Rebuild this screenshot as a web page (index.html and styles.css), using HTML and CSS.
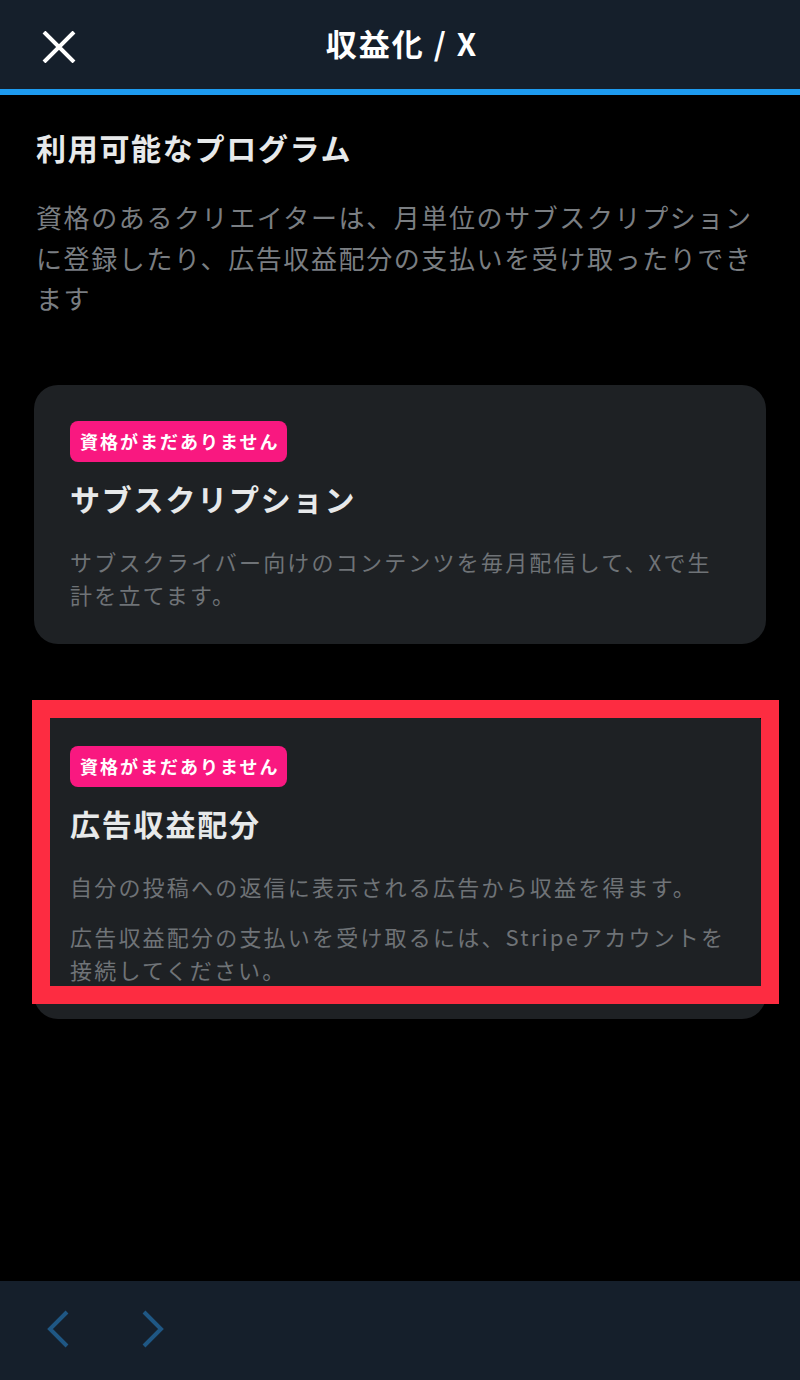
FILE: index.html
```html
<!DOCTYPE html>
<html lang="ja">
<head>
  <meta charset="UTF-8">
  <meta name="viewport" content="width=device-width, initial-scale=1.0">
  <title>収益化 / X</title>
  <link rel="stylesheet" href="styles.css">
</head>
<body>
  <div class="page">
    <div class="topbar">
      <a class="close" href="#">
        <svg width="36" height="32" viewBox="0 0 36 32"><path d="M3 1 L33 31 M33 1 L3 31" stroke="#fff" stroke-width="4" fill="none"/></svg>
      </a>
      <h1 class="title">収益化 / X</h1>
    </div>
    <div class="progress"></div>

    <div class="main">
      <h2 class="section-title">利用可能なプログラム</h2>
      <p class="section-desc">資格のあるクリエイターは、月単位のサブスクリプションに登録したり、広告収益配分の支払いを受け取ったりできます</p>

      <ul class="programs">
        <li class="card">
          <span class="badge">資格がまだありません</span>
          <h3 class="card-title">サブスクリプション</h3>
          <p class="card-desc">サブスクライバー向けのコンテンツを毎月配信して、Xで生計を立てます。</p>
        </li>
        <li class="card card-marked">
          <span class="badge">資格がまだありません</span>
          <h3 class="card-title">広告収益配分</h3>
          <p class="card-desc">自分の投稿への返信に表示される広告から収益を得ます。</p>
          <p class="card-desc">広告収益配分の支払いを受け取るには、Stripeアカウントを接続してください。</p>
          <i class="mark"></i>
        </li>
      </ul>
    </div>

    <div class="bottombar">
      <a class="nav-btn" href="#">
        <svg width="24" height="38" viewBox="0 0 24 38"><path d="M21 2 L4 19 L21 36" stroke="#1f5784" stroke-width="4" fill="none"/></svg>
      </a>
      <a class="nav-btn" href="#">
        <svg width="24" height="38" viewBox="0 0 24 38"><path d="M3 2 L20 19 L3 36" stroke="#1f5784" stroke-width="4" fill="none"/></svg>
      </a>
    </div>
  </div>
</body>
</html>
```

FILE: styles.css
```css
html,body,h1,h2,h3,p,ul,li{margin:0;padding:0;}
li{
  list-style: none;
}
body{
  background: #000;
  color: #e7e9ea;
  font-family: "Noto Sans CJK JP", "Noto Sans", sans-serif;
}
.page{
  height: 1380px;
  display: flex;
  flex-direction: column;
}
.topbar{
  flex-shrink: 0;
  height: 89px;
  background: #151f2b;
  position: relative;
  display: flex;
  align-items: center;
  justify-content: center;
}
.close{
  position: absolute;
  left: 41px;
  top: 31px;
  display: block;
  line-height: 0;
}
.title{
  font-size: 31px;
  font-weight: 700;
  color: #fff;
  letter-spacing: 2px;
  line-height: 40px;
  margin: -4px 0 0 4px;
}
.progress{
  flex-shrink: 0;
  height: 6px;
  background: #1d9bf0;
}
.main{
  flex: 1;
  padding: 32px 36px 0 36px;
}
.section-title{
  font-size: 30px;
  font-weight: 700;
  line-height: 40px;
  letter-spacing: 1.7px;
  color: #e7e9ea;
}
.section-desc{
  margin-top: 30px;
  font-size: 26px;
  line-height: 40.5px;
  letter-spacing: 1.6px;
  color: #7a7e82;
  padding-right: 4px;
}
.programs{
  margin: 66px -2px 0 -2px;
  display: flex;
  flex-direction: column;
  gap: 66px;
}
.card{
  background: #1e2124;
  border-radius: 24px;
  padding: 36px 36px 33px 36px;
  position: relative;
}
.badge{
  display: inline-block;
  background: #f91880;
  color: #fff;
  font-size: 18px;
  font-weight: 700;
  letter-spacing: 2px;
  line-height: 41px;
  height: 41px;
  padding: 0 8px 0 10px;
  border-radius: 8px;
}
.card-title{
  margin-top: 16px;
  font-size: 30px;
  font-weight: 700;
  line-height: 40px;
  letter-spacing: 1.8px;
  color: #e7e9ea;
}
.card-desc{
  margin-top: 27px;
  font-size: 22px;
  line-height: 33px;
  letter-spacing: 2.2px;
  color: #6f7377;
}
.card-desc + .card-desc{
  margin-top: 17px;
}
/* 赤枠のハイライト */
.mark{
  position: absolute;
  left: -2px;
  top: -10px;
  right: -13px;
  bottom: 15px;
  border: 18px solid #fd2c41;
}
.bottombar{
  flex-shrink: 0;
  height: 95px;
  background: #151f2b;
  display: flex;
  align-items: center;
  gap: 71px;
  padding: 0 0 4px 46px;
}
.nav-btn{
  display: block;
  line-height: 0;
}
```
